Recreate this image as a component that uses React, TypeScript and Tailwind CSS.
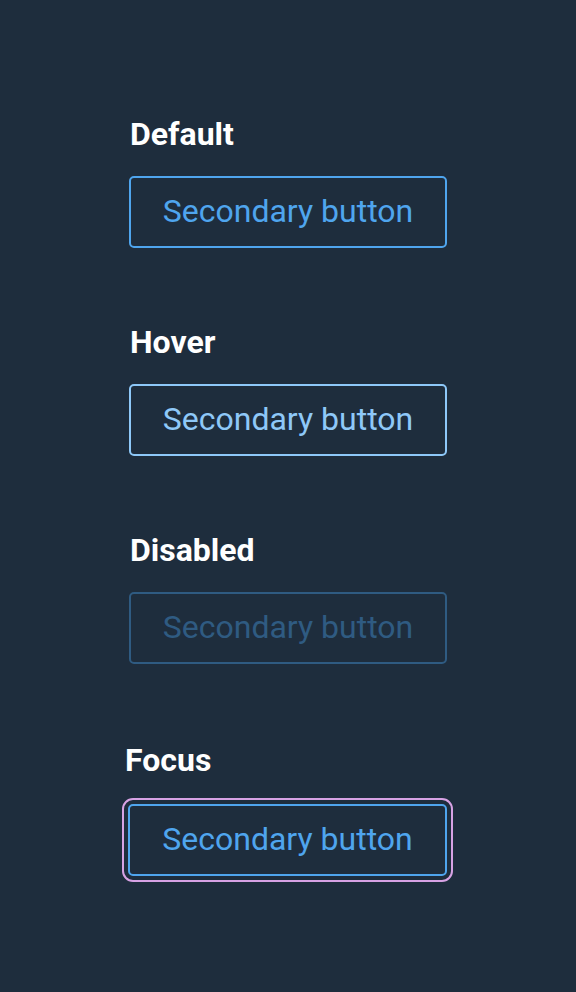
import React from "react";

const font = { fontFamily: "Roboto, 'Noto Sans', sans-serif" };

function Label({ children, className = "" }: { children: React.ReactNode; className?: string }) {
  return (
    <div className={"text-[32px] font-bold leading-[36px] text-white " + className}>{children}</div>
  );
}

export default function App() {
  return (
    <div className="min-h-[992px] w-[576px] bg-[#1e2d3d] pl-[129px] pt-[116px]" style={font}>
      <div className="flex flex-col items-start">
        <Label className="ml-px">Default</Label>
        <button className="mt-[24px] flex h-[72px] w-[318px] items-center justify-center rounded-[5px] border-2 border-[#4fa5ee] pb-[3px] text-[32px] text-[#4fa5ee]">
          Secondary button
        </button>

        <Label className="ml-px mt-[76px]">Hover</Label>
        <button className="mt-[24px] flex h-[72px] w-[318px] items-center justify-center rounded-[5px] border-2 border-[#8ec8f8] pb-[3px] text-[32px] text-[#8ec8f8]">
          Secondary button
        </button>

        <Label className="ml-px mt-[76px]">Disabled</Label>
        <button className="mt-[24px] flex h-[72px] w-[318px] items-center justify-center rounded-[5px] border-2 border-[#2f5b82] pb-[3px] text-[32px] text-[#2f5b82]">
          Secondary button
        </button>

        <Label className="ml-[-4px] mt-[78px]">Focus</Label>
        <button className="ml-[-1px] mt-[26px] flex h-[72px] w-[319px] items-center justify-center rounded-[5px] border-2 border-[#4fa5ee] pb-[3px] text-[32px] text-[#4fa5ee] outline-2 outline-offset-[4px] outline-[#d7a2e4] outline-solid">
          Secondary button
        </button>
      </div>
    </div>
  );
}
